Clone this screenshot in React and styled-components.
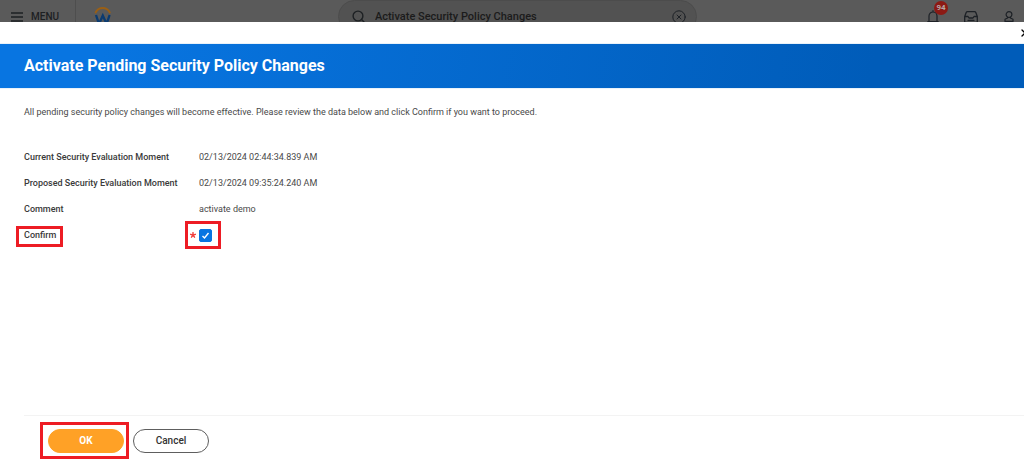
import React, { useState } from "react";
import styled, { createGlobalStyle } from "styled-components";

const GlobalStyle = createGlobalStyle`
  *, *::before, *::after { box-sizing: border-box; }
  body {
    margin: 0;
    background: #fff;
    color: #494949;
    font-family: Roboto, "Liberation Sans", sans-serif;
    font-size: 9px;
    line-height: 16px;
  }
  button, input { font: inherit; }
`;

const Page = styled.div`
  display: flex;
  flex-direction: column;
  min-height: 100vh;
`;

const TopBar = styled.header`
  display: grid;
  grid-template-columns: 33% minmax(0, 359px) 1fr;
  height: 22px;
  overflow: hidden;
  background: #5a5a5a;
  color: #1d2023;
`;

const TopSide = styled.div`
  display: flex;
  align-items: flex-start;
  justify-content: ${(p) => (p.$end ? "flex-end" : "flex-start")};
  gap: ${(p) => (p.$end ? "22px" : "0")};
  padding-right: ${(p) => (p.$end ? "7px" : "0")};
`;

const MenuButton = styled.button`
  display: flex;
  align-items: center;
  gap: 8px;
  width: 76px;
  height: 33px;
  padding: 0 0 0 11px;
  border: 0;
  border-right: 1px solid #4e4e4e;
  background: none;
  color: inherit;
  font-size: 10px;
  font-weight: 500;
`;

const HomeLink = styled.a`
  display: block;
  height: 33px;
  margin-left: 17px;
`;

const SearchBox = styled.div`
  display: flex;
  align-items: center;
  gap: 10px;
  height: 33px;
  padding: 0 9px 0 13px;
  border: 1px solid #4c4c4c;
  border-radius: 17px;
  background: #525252;
`;

const SearchInput = styled.input`
  flex: 1;
  min-width: 0;
  padding: 0;
  border: 0;
  outline: 0;
  background: none;
  color: #1b1b1b;
  font-size: 11px;
  font-weight: 500;
`;

const IconButton = styled.button`
  position: relative;
  display: flex;
  align-items: center;
  justify-content: center;
  width: 16px;
  height: 33px;
  padding: 0;
  border: 0;
  background: none;
  color: #1d2126;
`;

const Badge = styled.span`
  position: absolute;
  top: 1px;
  left: 9px;
  width: 14px;
  height: 14px;
  border-radius: 50%;
  background: #8c1a14;
  color: #b4a6a5;
  font-size: 8px;
  font-weight: 700;
  line-height: 14px;
  text-align: center;
`;

const Dialog = styled.main`
  display: flex;
  flex: 1;
  flex-direction: column;
  background: #fff;
`;

const CloseRow = styled.div`
  display: flex;
  justify-content: flex-end;
  height: 22px;
  overflow: hidden;
`;

const CloseButton = styled.button`
  display: flex;
  align-items: center;
  width: 3px;
  height: 22px;
  padding: 0;
  border: 0;
  background: none;
  overflow: hidden;

  svg { flex: none; }
`;

const TitleBand = styled.div`
  padding: 10px 24px;
  background: linear-gradient(100deg, #0875e1 0%, #0875e1 10%, #005cb9 85%);
  box-shadow: 0 0 1px #7fb0e2;
`;

const Title = styled.h1`
  margin: 0;
  color: #fff;
  font-size: 16px;
  font-weight: 700;
  line-height: 24px;
`;

const Content = styled.div`
  flex: 1;
  padding: 16px 24px;
`;

const Intro = styled.p`
  margin: 0 0 24px;
`;

const Fields = styled.div`
  display: flex;
  flex-direction: column;
`;

const Field = styled.div`
  display: grid;
  grid-template-columns: 175px 1fr;
  align-items: center;
  height: 26px;
`;

const Name = styled.span`
  color: #3a3a3a;
  font-weight: 500;
`;

const Marked = styled.span`
  position: relative;
  display: inline-flex;
  align-items: center;
  justify-self: start;

  &::after {
    content: "";
    position: absolute;
    inset: ${(p) => p.$inset};
    border: 3px solid #ed1c24;
    pointer-events: none;
  }
`;

const Required = styled.span`
  position: absolute;
  right: 100%;
  margin-right: 3px;
  color: #f0413f;
  display: flex;
`;

const CheckInput = styled.input`
  appearance: none;
  width: 13px;
  height: 13px;
  margin: 0;
  border: 1px solid ${(p) => (p.checked ? "#0875e1" : "#7b858f")};
  border-radius: 2px;
  background: ${(p) => (p.checked ? "#0875e1" : "#fff")};
`;

const Tick = styled.svg`
  position: absolute;
  inset: 0;
  pointer-events: none;
`;

const Footer = styled.footer`
  display: flex;
  gap: 9px;
  margin-left: 24px;
  padding: 13px 24px 8px;
  border-top: 1px solid #f3f3f3;
`;

const ActionButton = styled.button`
  width: 76px;
  height: 24px;
  padding: 0;
  border: 1px solid ${(p) => (p.$primary ? "#ffa126" : "#5e5e5e")};
  border-radius: 12px;
  background: ${(p) => (p.$primary ? "#ffa126" : "#fff")};
  color: ${(p) => (p.$primary ? "#fff" : "#333")};
  font-size: 10px;
  font-weight: ${(p) => (p.$primary ? 700 : 500)};
`;

const details = [
  ["Current Security Evaluation Moment", "02/13/2024 02:44:34.839 AM"],
  ["Proposed Security Evaluation Moment", "02/13/2024 09:35:24.240 AM"],
  ["Comment", "activate demo"],
];

const stroke = { fill: "none", stroke: "currentColor", strokeLinecap: "round", strokeLinejoin: "round" };

export default function App() {
  const [confirmed, setConfirmed] = useState(true);
  const [query, setQuery] = useState("Activate Security Policy Changes");

  return (
    <Page>
      <GlobalStyle />
      <TopBar>
        <TopSide>
          <MenuButton type="button">
            <svg width="12" height="10" viewBox="0 0 12 10" {...stroke} strokeLinecap="butt" strokeWidth="1.400">
              <path d="M0 1h12M0 5h12M0 9h12" />
            </svg>
            MENU
          </MenuButton>
          <HomeLink href="#" aria-label="Home">
            <svg width="20" height="33" viewBox="0 0 20 33" fill="none">
              <path d="M2.600 12.500C4.200 9.400 6.700 8 9.700 8s5.500 1.400 7.100 4.500" stroke="#9a5f14" strokeWidth="1.800" strokeLinecap="round" />
              <path d="M3 15l3 9 3.800-8.500 3.800 8.500 3-9" stroke="#0b3b70" strokeWidth="2.300" />
            </svg>
          </HomeLink>
        </TopSide>
        <SearchBox>
          <svg width="13" height="13" viewBox="0 0 13 13" {...stroke} strokeWidth="1.400">
            <circle cx="6" cy="6" r="4.900" />
            <path d="M9.600 9.600L12 12" />
          </svg>
          <SearchInput aria-label="Search" value={query} onChange={(e) => setQuery(e.target.value)} />
          <IconButton type="button" aria-label="Clear search" onClick={() => setQuery("")}>
            <svg width="14" height="14" viewBox="0 0 14 14" {...stroke} strokeWidth="1">
              <circle cx="7" cy="7" r="6.200" />
              <path d="M5 5l4 4M9 5l-4 4" />
            </svg>
          </IconButton>
        </SearchBox>
        <TopSide $end>
          <IconButton type="button" aria-label="Notifications">
            <svg width="12" height="14" viewBox="0 0 12 14" {...stroke} strokeWidth="1.200">
              <path d="M6 .6v1M.8 11.500h10.400M2 11.500V6a4 4 0 0 1 8 0v5.500M5 13h2" />
            </svg>
            <Badge>94</Badge>
          </IconButton>
          <IconButton type="button" aria-label="Inbox">
            <svg width="14" height="12" viewBox="0 0 14 12" {...stroke} strokeWidth="1.300">
              <path d="M.7 5.500L2.200 1.600Q2.600.7 3.500.7h7q.9 0 1.300.9L13.300 5.500v5.800H.7zM.7 5.500h3.300l1 1.500h4l1-1.500h3.300M4 9.300h6" />
            </svg>
          </IconButton>
          <IconButton type="button" aria-label="Profile">
            <svg width="10" height="11" viewBox="0 0 10 11" {...stroke} strokeWidth="1.200">
              <circle cx="5" cy="3.600" r="2.900" />
              <path d="M3.600 6.200v.8L1 8.200v2.200h8V8.200L6.400 7v-.8" />
            </svg>
          </IconButton>
        </TopSide>
      </TopBar>

      <Dialog>
        <CloseRow>
          <CloseButton type="button" aria-label="Close">
            <svg width="8" height="8" viewBox="0 0 8 8" {...stroke} strokeWidth="1.300">
              <path d="M1 1l6 6M7 1L1 7" />
            </svg>
          </CloseButton>
        </CloseRow>
        <TitleBand>
          <Title>Activate Pending Security Policy Changes</Title>
        </TitleBand>
        <Content>
          <Intro>
            All pending security policy changes will become effective. Please review the data below and click Confirm if
            you want to proceed.
          </Intro>
          <Fields>
            {details.map(([name, value]) => (
              <Field key={name}>
                <Name>{name}</Name>
                <span>{value}</span>
              </Field>
            ))}
            <Field>
              <Marked $inset="-1px -7px -4px -8px">
                <Name as="label" htmlFor="confirm">
                  Confirm
                </Name>
              </Marked>
              <Marked $inset="-8px -9px -7px -14px">
                <Required aria-hidden="true">
                  <svg width="6" height="6" viewBox="0 0 6 6" {...stroke} strokeWidth="1.400">
                    <path d="M3 .6V3M.6 2.300L3 3l2.400-.7M1.500 5.200L3 3l1.500 2.200" />
                  </svg>
                </Required>
                <CheckInput
                  id="confirm"
                  type="checkbox"
                  required
                  checked={confirmed}
                  onChange={(e) => setConfirmed(e.target.checked)}
                />
                {confirmed && (
                  <Tick width="13" height="13" viewBox="0 0 13 13" fill="none" stroke="#fff" strokeWidth="1.400">
                    <path d="M3.500 7l2 2 4-5" />
                  </Tick>
                )}
              </Marked>
            </Field>
          </Fields>
        </Content>
        <Footer>
          <Marked $inset="-7px -5px -6px -8px">
            <ActionButton type="button" $primary>
              OK
            </ActionButton>
          </Marked>
          <ActionButton type="button">Cancel</ActionButton>
        </Footer>
      </Dialog>
    </Page>
  );
}
